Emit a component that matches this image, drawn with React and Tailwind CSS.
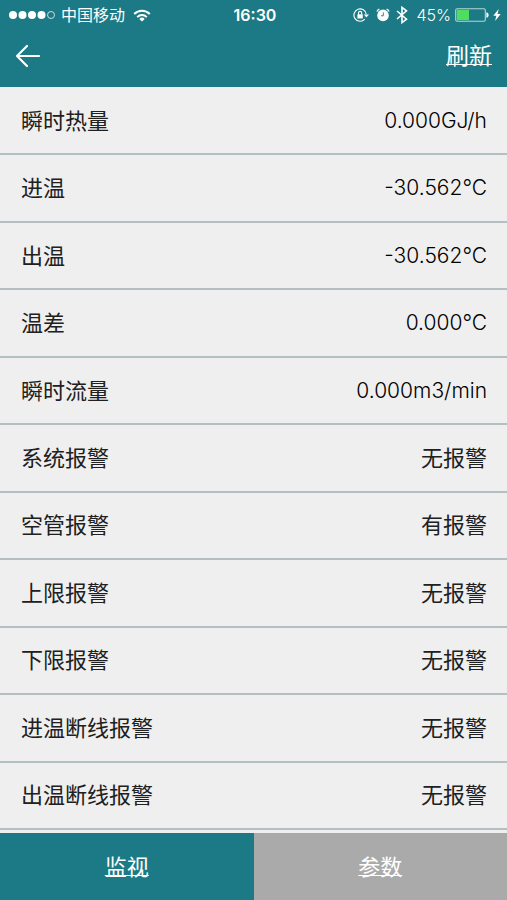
const readings = [
  { label: "瞬时热量", value: "0.000GJ/h" },
  { label: "进温", value: "-30.562°C" },
  { label: "出温", value: "-30.562°C" },
  { label: "温差", value: "0.000°C" },
  { label: "瞬时流量", value: "0.000m3/min" },
  { label: "系统报警", value: "无报警", status: true },
  { label: "空管报警", value: "有报警", status: true },
  { label: "上限报警", value: "无报警", status: true },
  { label: "下限报警", value: "无报警", status: true },
  { label: "进温断线报警", value: "无报警", status: true },
  { label: "出温断线报警", value: "无报警", status: true },
];

function SignalDots() {
  return (
    <svg width="46" height="10" viewBox="0 0 46 10" fill="#fff" aria-hidden="true">
      <circle cx="4" cy="5" r="4" />
      <circle cx="13.5" cy="5" r="4" />
      <circle cx="23" cy="5" r="4" />
      <circle cx="32.5" cy="5" r="4" />
      <circle cx="42" cy="5" r="3.5" fill="none" stroke="#d5e8ea" strokeWidth="0.9" />
    </svg>
  );
}

function WifiIcon() {
  return (
    <svg width="18" height="13" viewBox="0 0 18 13" fill="none" stroke="#fff" strokeWidth="2" aria-hidden="true">
      <path d="M1.2 5a11 11 0 0 1 15.6 0" />
      <path d="M4.2 8.1a6.8 6.8 0 0 1 9.6 0" />
      <path d="M9 12.5 6.3 9.9a3.8 3.8 0 0 1 5.4 0Z" fill="#fff" stroke="none" />
    </svg>
  );
}

function RotationLockIcon() {
  return (
    <svg width="17" height="14" viewBox="0 0 17 14" fill="none" stroke="#fff" aria-hidden="true">
      <path d="M11.8 11.2A6.2 6.2 0 1 1 13.3 6.4" strokeWidth="1.1" />
      <path d="M10.8 6.4h5.2l-2.6 3.2Z" fill="#fff" stroke="none" />
      <rect x="4.4" y="6.2" width="5.4" height="4.2" rx="0.5" fill="#fff" stroke="none" />
      <path d="M5.5 6.4V5a1.6 1.6 0 0 1 3.2 0v1.4" strokeWidth="1.1" />
    </svg>
  );
}

function AlarmIcon() {
  return (
    <svg width="14" height="14" viewBox="0 0 14 14" aria-hidden="true">
      <circle cx="7" cy="7.4" r="5.8" fill="#fff" />
      <path d="M0.9 3.6A4 4 0 0 1 3.4 1.1M13.1 3.6a4 4 0 0 0-2.5-2.5" fill="none" stroke="#fff" strokeWidth="1.2" />
      <path d="M7.3 4.4v3.4H5" fill="none" stroke="#1b7a85" strokeWidth="0.9" />
    </svg>
  );
}

function BluetoothIcon() {
  return (
    <svg width="12" height="18" viewBox="0 0 12 18" fill="none" stroke="#fff" strokeWidth="1.6" aria-hidden="true">
      <path d="m1 5 9.5 8.2L6 16.6V1.4l4.5 3.4L1 13" />
    </svg>
  );
}

function BatteryIcon() {
  return (
    <svg width="34" height="14" viewBox="0 0 34 14" aria-hidden="true">
      <rect x="0.7" y="0.7" width="29.6" height="12.6" rx="1.5" fill="none" stroke="#b9d4d7" strokeWidth="1.1" />
      <rect x="1.8" y="1.8" width="12.2" height="10.4" fill="#4fdc62" />
      <path d="M31.4 4.2c3 .7 3 4.9 0 5.6Z" fill="#fff" />
    </svg>
  );
}

function BoltIcon() {
  return (
    <svg width="8" height="12" viewBox="0 0 8 12" fill="#fff" aria-hidden="true">
      <path d="M5.7 0 .3 6.8h3L2.1 12 7.7 4.9H4.6Z" />
    </svg>
  );
}

function StatusBar() {
  return (
    <div className="grid h-[30px] grid-cols-[1fr_auto_1fr] items-center pr-1.5 pl-[9px] text-base leading-none">
      <div className="flex items-center">
        <SignalDots />
        <span className="mr-2 ml-1.5">中国移动</span>
        <WifiIcon />
      </div>
      <time className="font-semibold">16:30</time>
      <div className="flex items-center justify-end">
        <RotationLockIcon />
        <span className="mx-1.5 flex"><AlarmIcon /></span>
        <BluetoothIcon />
        <span className="mr-1 ml-2 text-base font-light">45%</span>
        <BatteryIcon />
        <span className="ml-1 flex"><BoltIcon /></span>
      </div>
    </div>
  );
}

export default function App() {
  return (
    <div className="flex min-h-screen flex-col bg-[#efefef] font-['Inter','Noto_Sans_CJK_SC',sans-serif] text-[#202020]">
      <header className="flex h-[87px] flex-col bg-[#1b7a85] text-white">
        <StatusBar />
        <div className="flex h-[51px] items-center justify-between px-[15px]">
          <button type="button" aria-label="返回">
            <svg width="26" height="24" viewBox="0 0 26 24" fill="none" stroke="#fff" strokeWidth="2.2" strokeLinecap="round" strokeLinejoin="round" aria-hidden="true">
              <path d="M24 12H2M12 2 2 12l10 10" />
            </svg>
          </button>
          <a href="#refresh" className="text-[23px] leading-8 underline decoration-1 underline-offset-0">刷新</a>
        </div>
      </header>

      <main className="flex flex-1 flex-col pt-px pb-[3px]">
        <dl className="flex flex-1 flex-col">
          {readings.map(({ label, value, status }) => (
            <div key={label} className="flex min-h-14 flex-1 items-center justify-between border-b-2 border-[#b4bfc1] pr-5 pl-[21px] leading-8">
              <dt className="text-[22px]">{label}</dt>
              <dd className={status ? "text-[22px]" : "text-[21px] font-light text-black"}>{value}</dd>
            </div>
          ))}
        </dl>
      </main>

      <nav className="grid h-[67px] grid-cols-2 text-[22px] leading-8 text-white">
        <a href="#monitor" aria-current="page" className="flex items-center justify-center bg-[#1b7a85] underline decoration-1 underline-offset-0">监视</a>
        <a href="#parameters" className="flex items-center justify-center bg-[#aaaaaa] underline decoration-1 underline-offset-0">参数</a>
      </nav>
    </div>
  );
}
